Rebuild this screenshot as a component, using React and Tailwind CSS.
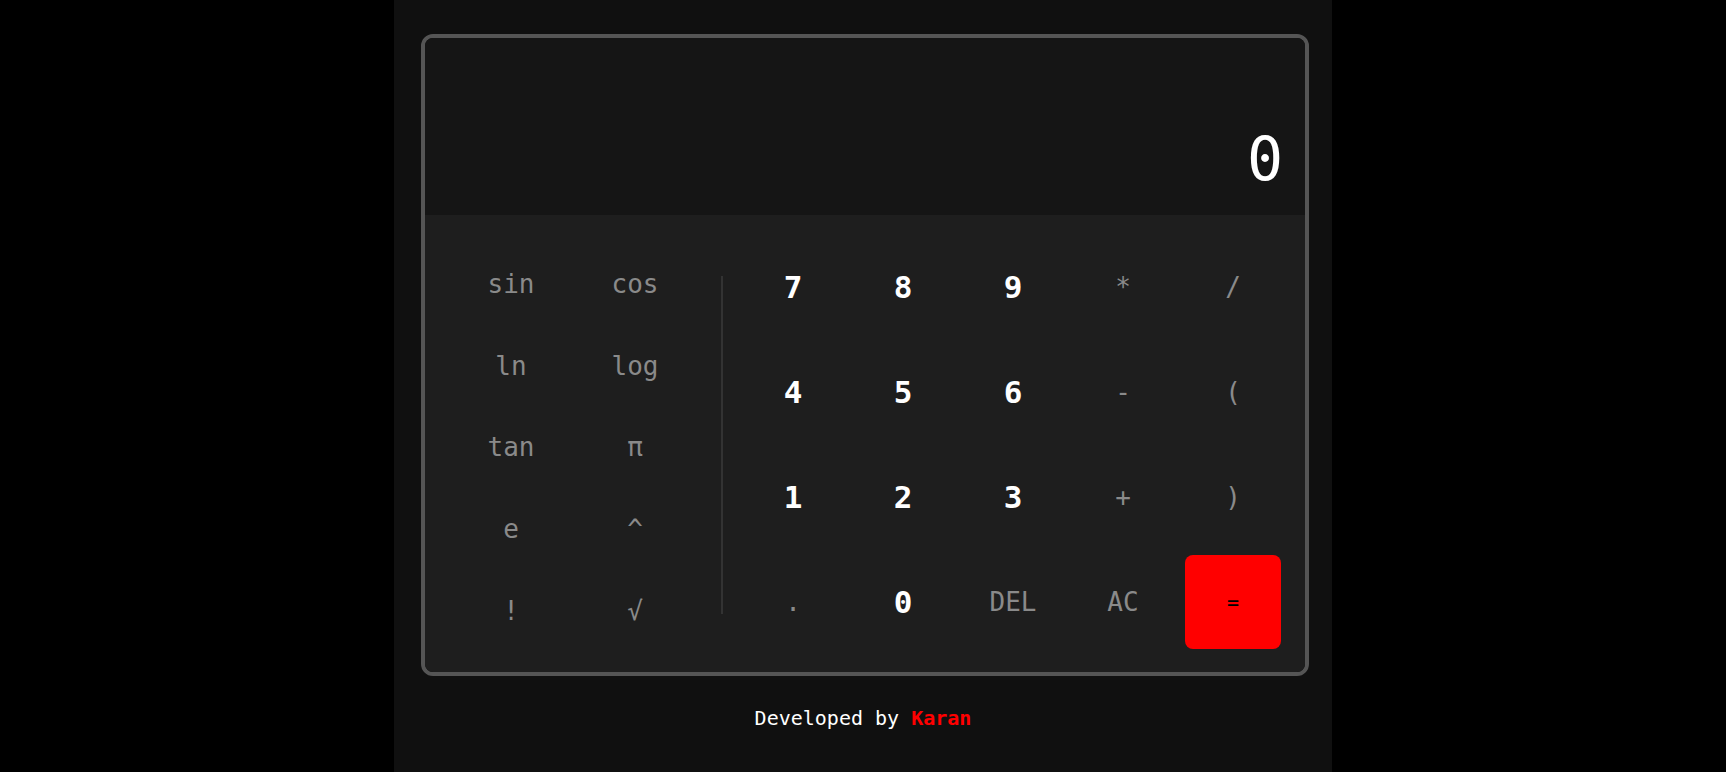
import React, { useState } from "react";

const sci = ["sin", "cos", "ln", "log", "tan", "π", "e", "^", "!", "√"];

const keys = [
  { k: "7", d: true }, { k: "8", d: true }, { k: "9", d: true }, { k: "*" }, { k: "/" },
  { k: "4", d: true }, { k: "5", d: true }, { k: "6", d: true }, { k: "-" }, { k: "(" },
  { k: "1", d: true }, { k: "2", d: true }, { k: "3", d: true }, { k: "+" }, { k: ")" },
  { k: "." }, { k: "0", d: true }, { k: "DEL" }, { k: "AC" }, { k: "=", eq: true },
];

export default function App() {
  const [value] = useState("0");

  return (
    <div className="min-h-screen bg-black flex justify-center font-['DejaVu_Sans_Mono','Liberation_Mono',monospace]">
      <div className="w-[938px] min-h-screen bg-[#101010] pt-[34px] flex flex-col items-center">
        <div className="w-[888px] ml-[4px] border-4 border-[#555555] rounded-[12px] overflow-hidden">
          {/* Display */}
          <div className="h-[177px] bg-[#151515] flex items-end justify-end pr-[22px] pb-[26px]">
            <span className="text-[60px] leading-none text-white">{value}</span>
          </div>

          {/* Keypad */}
          <div className="bg-[#1e1e1e] px-[24px] pt-[25px] pb-[23px] flex">
            <div className="w-[248px] grid grid-cols-2 grid-rows-5 h-[409px]">
              {sci.map((s) => (
                <button key={s} className="flex items-center justify-center pt-[7px] text-[26px] text-[#8a8a8a]">
                  {s}
                </button>
              ))}
            </div>

            <div className="self-center h-[338px] w-[2px] bg-[#333333] ml-[24px] mr-[22px]" />

            <div className="grid grid-cols-[repeat(5,96px)] grid-rows-[repeat(4,94px)] gap-x-[14px] gap-y-[11px]">
              {keys.map(({ k, d, eq }) => (
                <button
                  key={k}
                  className={
                    eq
                      ? "flex items-center justify-center rounded-lg bg-[#ff0000] text-black text-[20px]"
                      : d
                      ? "flex items-center justify-center text-[31px] font-bold text-white"
                      : "flex items-center justify-center text-[26px] text-[#8a8a8a]"
                  }
                >
                  {k}
                </button>
              ))}
            </div>
          </div>
        </div>

        <p className="mt-[28px] text-[20px] leading-[28px] text-white">
          Developed by <span className="font-bold text-[#ff0000]">Karan</span>
        </p>
      </div>
    </div>
  );
}
